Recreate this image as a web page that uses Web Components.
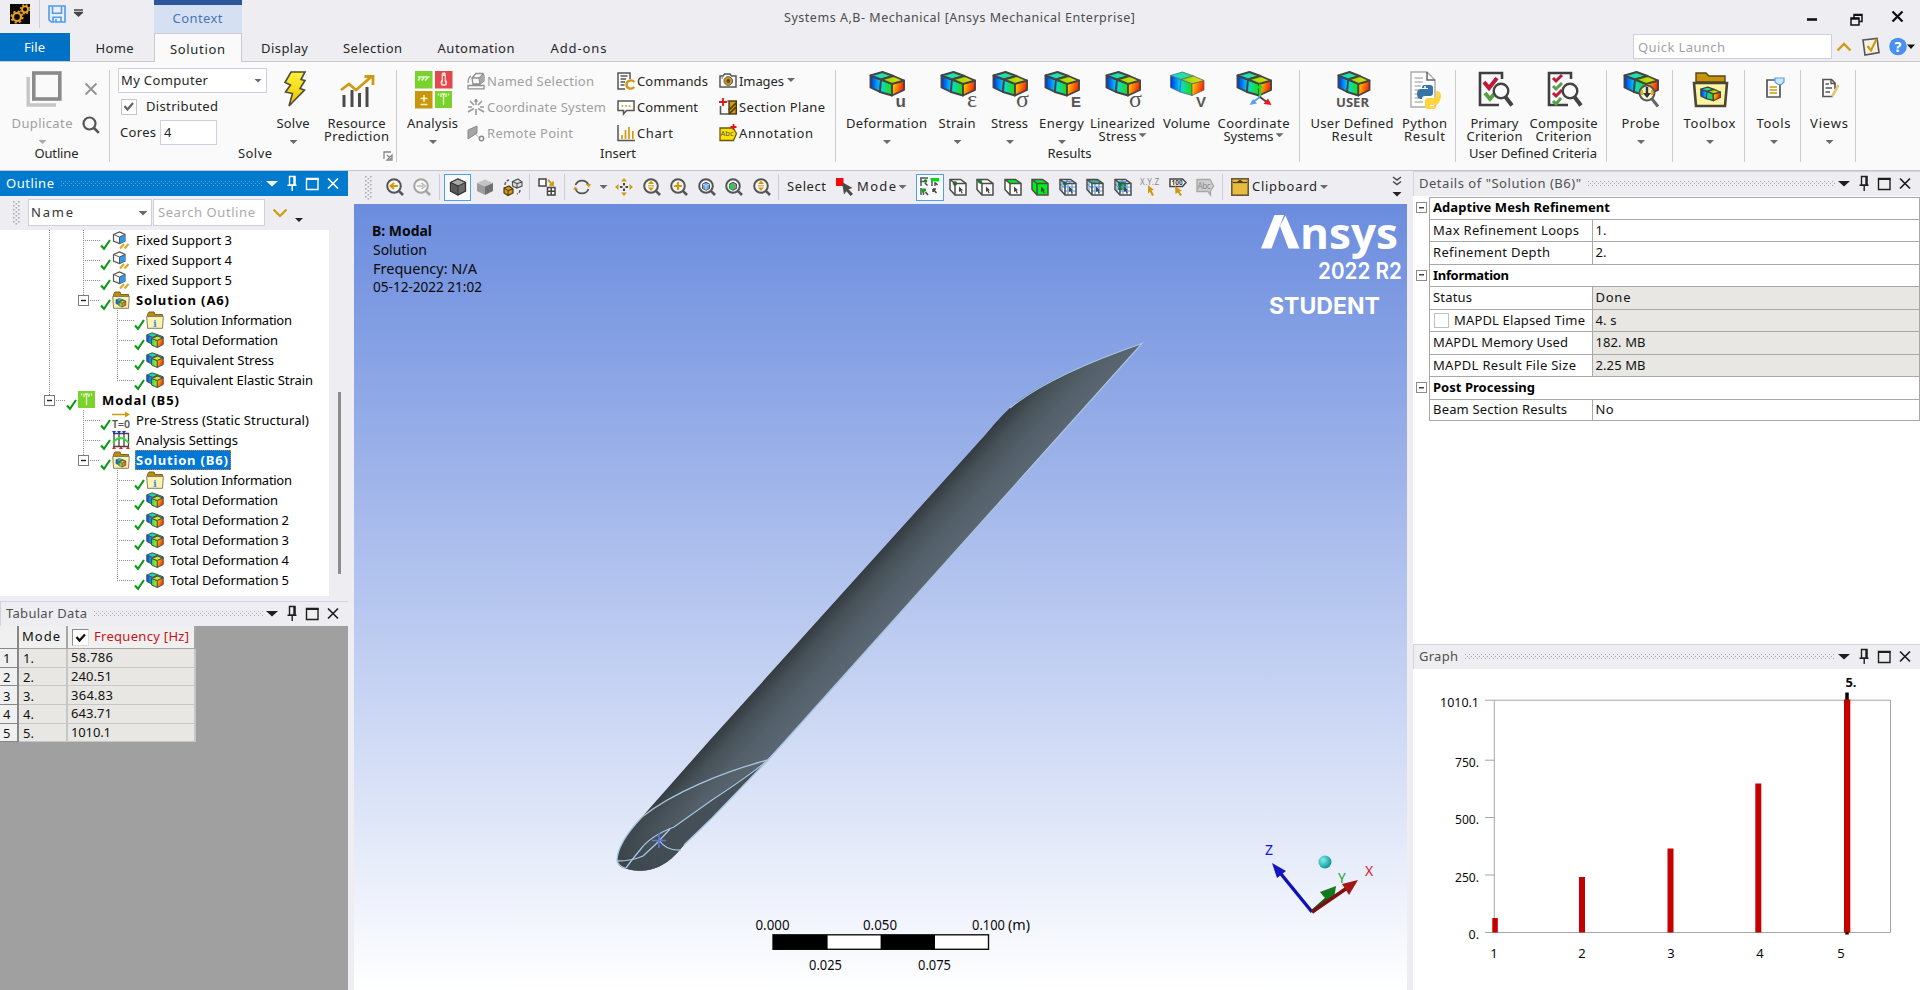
<!DOCTYPE html>
<html lang="en">
<head>
<meta charset="utf-8">
<title>Systems A,B - Mechanical</title>
<style>
html,body{margin:0;padding:0;height:100%;overflow:hidden}
body{font:13px/16px "Noto Sans","Open Sans",sans-serif;color:#262626;background:#eeeef2;width:1920px;height:990px}
</style>
</head>
<body>
<mech-app></mech-app>
<script>
/* ---------- icon library ---------- */
const grad=(id,a,b,x2=1,y2=0)=>`<linearGradient id="${id}" x1="0" y1="0" x2="${x2}" y2="${y2}"><stop offset="0" stop-color="${a}"/><stop offset="1" stop-color="${b}"/></linearGradient>`;
const cubes=(sw=1.9,st='#444')=>`<defs>${grad('a','#0030e0','#00dcff')}${grad('b','#00dcf0','#28d800')}${grad('c','#ffe800','#ff2000',1,.3)}${grad('d','#00e0ff','#40e050')}${grad('e','#70e000','#ffd800')}</defs>
<g stroke="${st}" stroke-width="${sw}" stroke-linejoin="round"><path fill="url(#a)" d="M1.5 4.5 12 8.5 11 21 1.5 16.5Z"/><path fill="url(#b)" d="M12 8.5 23 12.8V24.5L11 21Z"/><path fill="url(#c)" d="M23 12.8 35 9.5V19L23 24.5Z"/><path fill="url(#d)" d="M1.5 4.5 13.5 1 24.5 5 12 8.5Z"/><path fill="url(#e)" d="M24.5 5 35 9.5 23 12.8 12 8.5Z"/></g>`;
/* compact double cube used at tree size */
const miniCubes=`<defs>${grad('a','#1040e0','#00d0f0')}${grad('b','#20d060','#c8f000')}${grad('c','#ffd800','#ff2800',1,.6)}${grad('d','#00c8f0','#40e060')}</defs>
<g stroke="#4a4f58" stroke-width="1" stroke-linejoin="round"><path fill="url(#a)" d="M.8 4 7 6.500V13.500L.8 10.500Z"/><path fill="url(#d)" d="M.8 4 6 1.800 12 3.800 7 6.500Z"/><path fill="url(#b)" d="M5.500 7.500 11.300 9.500V16.500L5.500 14Z"/><path fill="#c8e820" d="M5.500 7.500 11.500 5 17.200 7 11.300 9.500Z"/><path fill="url(#c)" d="M11.300 9.500 17.200 7V13.500L11.300 16.500Z"/><path fill="#30d050" d="M12 3.800 17.200 5.800V7L11.500 5 7 6.500Z"/></g>`;
const sub=(t,f='Liberation Sans',s=17,w=700)=>`<text x="37" y="35.500" text-anchor="end" font-family="${f}" font-size="${s}" font-weight="${w}" fill="#555">${t}</text>`;
const mag=(inner,c='#555')=>`<circle cx="8" cy="8" r="6.8" fill="#f6f6f4" stroke="${c}" stroke-width="2"/><path d="M12.8 12.8 17 17" stroke="${c}" stroke-width="2.6"/>${inner}`;
const gold='#cf9a12';
const box=(fills,grid)=>`<path d="M1 1.5H11.5L17 5.5V17H6L1 11.5Z" fill="#fafafa"/>${fills}<g fill="none" stroke="${grid?'#5a9be8':'#555'}" stroke-width="1.2">${grid?'<path d="M9 5V17M13 5V17M5 9H17M5 13H17M3 3V14M4 3.5H14M7 1.5 12 5.5M1 6 6 10"/>':''}</g><path d="M1 1.5H11.5L17 5.5V17H6L1 11.5ZM1 1.5 6 5.5H17M6 5.5V17" fill="none" stroke="#4c4c4c" stroke-width="1.5"/><path d="M10 8.5 14 12.2 12.5 12.4 13.8 15 12.6 15.6 11.5 13 10 14Z" fill="#444"/>`;
const folder=(inner)=>`<path d="M1.5 3.5 3 1H8L9 3.5H16.5V7H1.5Z" fill="#b98a14" stroke="#7a6226"/><path d="M.7 5.5H17.3L16.5 17.3H1.6Z" fill="#fdf2b0" stroke="#86805c"/>${inner}`;
const modalIcon='<rect width="17" height="17" fill="#7ad32c"/><path d="M8.5 3V14M6 2.5V6M11 2.5V6M3.5 2.5V4.5M13.5 2.5V4.5M7 3H10" stroke="#e8fbd6" stroke-width="1.3" fill="none"/>';
const critDoc='<path d="M25 8V2H3V34H22" fill="none" stroke="#3f3f3f" stroke-width="2.6"/>';
const critMag='<circle cx="24" cy="20" r="7.3" fill="#fdfdfd" stroke="#444" stroke-width="2.4"/><path d="M28.5 26 35 34.5" stroke="#444" stroke-width="4"/>';
const I={
app:[20,20,'<rect width="20" height="20" fill="#0b0a08"/><g fill="none" stroke="#e8a21c"><circle cx="7" cy="13" r="4" stroke-width="2.2"/><circle cx="7" cy="13" r="5.6" stroke-width="1.8" stroke-dasharray="2.2 2.2"/><circle cx="15" cy="5.3" r="3" stroke-width="1.8"/><circle cx="15" cy="5.3" r="4.4" stroke-width="1.6" stroke-dasharray="1.8 1.7"/></g>'],
save:[18,18,'<g fill="none" stroke="#4c9df2" stroke-width="1.6"><path d="M1 1H17V17H3.5L1 14.8Z"/><path d="M4.5 1V8.3H13.5V1M5 17V12.3H13V17M8 14V17"/></g>'],
qat:[9,8,'<path d="M0 1H9M0 3.5H9" stroke="#444" stroke-width="1.5"/><path d="M.3 4H8.7L4.5 8Z" fill="#444"/>'],
win:[110,20,'<g stroke="#111" fill="none"><path d="M6 11.5H16" stroke-width="2.600"/><path d="M50 10H58V17H50ZM53 9.5V6.5H61V13.5H58.5" stroke-width="1.5"/><path d="M50 10.8H58M53 7H61" stroke-width="2"/><path d="M91.5 3.5 101.500 13.500M101.500 3.5 91.5 13.500" stroke-width="2.3"/></g>'],
help:[88,28,`<path d="M5.5 17.5 12 11 18.5 17.5" fill="none" stroke="${gold}" stroke-width="2.4"/><path d="M31 7 45 5.500 47 19.500 33 22Z" fill="#f4f0e4" stroke="#555" stroke-width="1.6"/><path d="M35.5 13 39 17.5 44.5 6" stroke="${gold}" stroke-width="2.2" fill="none"/><circle cx="66" cy="13.5" r="8.8" fill="#4a90f0"/><text x="66" y="18.7" text-anchor="middle" font-size="14.5" font-weight="700" fill="#fff">?</text><path d="M75 11.5H83L79 16Z" fill="#111"/>`],
dup:[36,36,'<path d="M2.2 6V34H30" fill="none" stroke="#c6c6c6" stroke-width="3.4"/><rect x="7.8" y="2" width="26" height="26" fill="#fafafa" stroke="#8a8a8a" stroke-width="3.6"/>'],
del:[14,14,'<path d="M1.5 1.5 12.5 12.5M12.5 1.5 1.5 12.5" stroke="#929292" stroke-width="1.8"/>'],
find:[18,18,'<circle cx="7.5" cy="7.5" r="6" fill="none" stroke="#555" stroke-width="2.2"/><path d="M12 12 16.8 16.8" stroke="#555" stroke-width="2.6"/>'],
bolt:[36,36,`<defs>${grad('a','#fff23a','#e8c400',0,1)}</defs><path d="M14 1H28L24 8.5 28 9.5 23 17.5 27.5 19 12 35 15.5 22.5 8.5 21 13.5 14 8 11.5Z" fill="url(#a)" stroke="#4c4a3a" stroke-width="1.6"/>`],
resource:[36,36,`<path d="M4 36V24M12 36V19M19.5 36V22M27 36V16" stroke="#4a4a4a" stroke-width="3"/><path d="M1 19 9 13 16 19 31 6M24.5 5.5H33V14" fill="none" stroke="${gold}" stroke-width="2.8"/>`],
launch:[10,10,'<path d="M1 8V1H8M4 4 8 8M9 4V9H4Z" fill="none" stroke="#888" stroke-width="1.3"/>'],
analysis:[38,38,`<rect width="17.5" height="17.5" fill="#7ad32c"/><rect x="20" width="17.5" height="17.5" fill="#e2484c"/><rect y="20" width="17.5" height="17.5" fill="#c8960c"/><g transform="translate(20 20)">${modalIcon}</g><path d="M3 6H14.5M3 9.5 5 7M6.5 9.5 9 7M10 9.5 12.5 7" stroke="#e8fbd6" stroke-width="1.5"/><path d="M28.8 3.5V10" stroke="#fbd8d8" stroke-width="4.4" stroke-linecap="round"/><circle cx="28.8" cy="11.8" r="3.3" fill="#fbd8d8"/><path d="M28.8 5V11" stroke="#e2484c" stroke-width="1.6"/><circle cx="28.8" cy="11.8" r="1.5" fill="#e2484c"/><path d="M5.5 27.5H12.5M9 24V31M5.5 33.5H12.5" stroke="#fff3c8" stroke-width="1.5"/>`],
named:[18,18,'<g fill="none" stroke="#8e8e8e" stroke-width="1.3"><path d="M5 6 9 1.5H16L17 4V9L13 12H6ZM5 6H12L16.5 2M12 6 13 12M1 16.8H17V13.5H1ZM1 11C1 8 2 5 4 4"/></g><path d="M12.5 6 16.5 3V9L13 11.5Z" fill="#a6a6a6"/>'],
coord:[18,18,'<g stroke="#9a9a9a" stroke-width="1.6"><path d="M9 1V7M9 11V17M1 14 7 10.5M17 14 11 10.5M3 3 7 7M15 3 11 7M1 9H5M13 9H17"/></g><path d="M6.5 3.5 9 1 11.5 3.5Z" fill="#888"/>'],
remote:[18,18,'<path d="M1 6 10 2V9L1 15Z" fill="#a5a5a5" stroke="#888"/><path d="M7 9 14 15" stroke="#999" stroke-dasharray="2 1"/><circle cx="14.5" cy="14.5" r="2.2" fill="none" stroke="#888" stroke-width="1.4"/>'],
cmd:[18,18,`<path d="M13 7V1H1V17H8" fill="#fff" stroke="#555" stroke-width="1.5"/><path d="M3.5 4H10.5M3.5 7H9M3.5 10H8M3.5 13H7.5" stroke="#555" stroke-width="1.5"/><path d="M17.3 10C15 7 9.5 8.5 9.5 12.7S15 17.8 17.3 15" fill="none" stroke="${gold}" stroke-width="2.4"/>`],
comment:[18,18,`<path d="M1 3H17V12.5H9.5L6.5 16V12.5H1Z" fill="#fff" stroke="#555" stroke-width="1.5"/><path d="M4.5 8H13.5" stroke="${gold}" stroke-width="1.7" stroke-dasharray="1.8 1.8"/>`],
chart:[18,18,`<path d="M1 1V16.5H18" stroke="#555" stroke-width="1.5" fill="none"/><path d="M5 15V11M8.5 15V6M12 15V3M15.8 15V7" stroke="${gold}" stroke-width="1.7"/>`],
images:[18,18,`<path d="M1 4H4L5.5 2H11L12.5 4H17V15H1Z" fill="#fafafa" stroke="#555" stroke-width="1.5"/><circle cx="9.3" cy="9" r="4.3" fill="${gold}" stroke="#555"/><circle cx="9.3" cy="9" r="1.9" fill="#554a30"/><path d="M2.5 6H4" stroke="#555"/>`],
section:[18,18,`<rect x="10" y="3" width="7.3" height="13" fill="${gold}" stroke="#4a3a10" stroke-width="1.4"/><path d="M10 12 17 5M10 16 17 9" stroke="#4a3a10" stroke-width="1.6"/><path d="M1.5 8V16H10" fill="none" stroke="#555" stroke-width="1.6"/><path d="M4 0V8M0 4H8" stroke="#e81414" stroke-width="1.8"/><path d="M8 3H10" stroke="#555"/>`],
annot:[18,18,'<path d="M1 4H14L17.5 9.5 14.5 16.5H1Z" fill="#ffe000" stroke="#635a20" stroke-width="1.3"/><text x="1.5" y="12" font-size="7.5" fill="#555">Abc</text><path d="M14.5 0V6M11.5 3H17.5" stroke="#e81414" stroke-width="1.8"/>'],
rU:[38,38,cubes()+sub('u')],rE:[38,38,cubes()+sub('ε','Liberation Serif',24,400)],rS:[38,38,cubes()+sub('σ','Liberation Serif',24,400)],rEn:[38,38,cubes()+sub('E','Liberation Sans',15)],rV:[38,38,cubes(.8,'#567')+sub('V','Liberation Sans',15)],
rC:[38,38,cubes()+'<path d="M24 26V15" stroke="#22d822" stroke-width="2.4"/><path d="M20.8 17.5H27.2L24 12.5Z" fill="#18e018"/><path d="M24 26 17 31" stroke="#5aa0f0" stroke-width="2"/><path d="M13.5 34 21 32.5 17 28Z" fill="#5aa0f0"/><path d="M24 26 32 32" stroke="#444" stroke-width="2"/><path d="M35.5 34 27.5 33 32 27.5Z" fill="#f01818"/>'],
rUser:[38,38,`<g transform="translate(2 0) scale(.93 1)">${cubes()}</g><text x="17.500" y="35.8" text-anchor="middle" font-size="11.5" font-weight="700" fill="#555" textLength="33" lengthAdjust="spacingAndGlyphs">USER</text>`],
rPy:[38,38,'<path d="M4 1H20L28 9V36H4Z" fill="#fdfdfd" stroke="#aaa" stroke-width="1.4"/><path d="M20 1V9H28" fill="none" stroke="#666" stroke-width="1.5"/><path d="M7.500 7H16M7.500 11H16M7.500 15H14M7.500 19H12M7.500 23H11M7.500 27H12M7.500 31H16" stroke="#b8b8b8" stroke-width="1.300"/><path d="M17 14H23Q26 14 26 17V22Q26 25 23 25H18Q15 25 15 28H13Q10 27 10 22.500T14 18H21V17H15Q15 14 17 14Z" fill="#3974a6"/><path d="M27 38H21Q18 38 18 35V30Q18 27 21 27H26Q29 27 29 24V20Q34 20 34 25T30 34H23V35H29Q29 38 27 38Z" fill="#ffd640"/><circle cx="18" cy="16" r="1" fill="#fff"/>'],
rPri:[38,38,critDoc+'<path d="M7 11 12 17 20 7" fill="none" stroke="#c01838" stroke-width="4"/><path d="M8 22 13 28 18 22" fill="none" stroke="#58a048" stroke-width="4"/>'+critMag],
rCom:[38,38,critDoc+'<path d="M7 7 10 10 16 4M7 22 10 25 16 19" fill="none" stroke="#c01838" stroke-width="3"/><path d="M7 15 10 18 16 12M7 30 10 33 15 27" fill="none" stroke="#58a048" stroke-width="3"/>'+critMag],
rPro:[38,38,cubes()+'<circle cx="24" cy="22" r="7.500" fill="#fff6d0" fill-opacity=".9" stroke="#555" stroke-width="2"/><path d="M24 16V24" stroke="#333" stroke-width="2.400"/><path d="M20 22H28L24 27Z" fill="#333"/><path d="M19 19V24M29 19V24" stroke="#e8b000" stroke-width="2"/><path d="M29 28 35 35.500" stroke="#666" stroke-width="3"/>'],
rBox:[38,38,'<path d="M4 11V2H14L17 5H33V11Z" fill="#c8920a" stroke="#56471c" stroke-width="1.400"/><path d="M2 12H35L33 35H4Z" fill="#fff3a4" stroke="#4a4636" stroke-width="2.600"/><g transform="translate(8 15.500) scale(.58)">'+cubes(2.2)+'</g>'],
rTool:[38,38,'<path d="M13 9H20L24 13V26H11V9Z" fill="#fff" stroke="#555" stroke-width="1.700"/><path d="M13.500 16H21M13.500 19H21M13.500 22H21" stroke="'+gold+'" stroke-width="1.500"/><path d="M19 7H28V11L25.500 13.500H22L19 11Z" fill="#cfe4ff" stroke="#5a9be8" stroke-width="1.200"/>'],
rView:[38,38,'<path d="M23 18V12L19.500 8.500H11V25.500H21" fill="#fff" stroke="#555" stroke-width="1.700"/><path d="M19 8.500V12.500H23M13.500 13H17M13.500 17H20M13.500 21H18" stroke="#555" stroke-width="1.400" fill="none"/><path d="M26.500 14 20 25.500" stroke="#e8c878" stroke-width="2.600"/>'],
grip:[8,24,[0,1,2,3,4,5].map(i=>`<rect x="0" y="${1+i*4}" width="1.600" height="1.600" fill="#b0b0b4"/><rect x="5" y="${1+i*4}" width="1.600" height="1.600" fill="#b0b0b4"/><rect x="2.500" y="${3+i*4}" width="1.600" height="1.600" fill="#b0b0b4"/>`).join('')],
tBack:[18,18,mag(`<path d="M12 8H6M8 5 4.500 8 8 11" stroke="${gold}" stroke-width="2" fill="none"/>`)],
tFwd:[18,18,mag('<path d="M4 8H10M8.500 5 12 8 8.500 11" stroke="#bbb" stroke-width="1.600" fill="none"/>','#a5a5a5')],
tCube:[18,18,'<path d="M1.500 4.500 9 1 16.500 4.500V13L9 17 1.500 13Z" fill="#6a6a6a" stroke="#333" stroke-width="1.300"/><path d="M1.500 4.500 9 1 16.500 4.500 9 8Z" fill="#a8a8a8" stroke="#333"/><path d="M9 8V17L1.500 13V4.500Z" fill="#5a5a5a" stroke="#333"/>'],
tCube2:[18,18,'<path d="M1 5 9 1.500 17 5 9 8.500Z" fill="#c4c4c4"/><path d="M1 5 9 8.500V17L1 13Z" fill="#9c9c9c"/><path d="M17 5 9 8.500V17L17 13Z" fill="#707070"/>'],
tSwap:[20,18,`<path d="M9.500 3.500 15 1 19 4V8L14 10 9.500 8ZM9.500 3.500 14 5.500 19 4M14 5.500V10" fill="#ddd" stroke="#555" stroke-width="1.200"/><path d="M1 10 6 8 10 11V15L5 17.500 1 15Z" fill="${gold}" stroke="#4a3a10" stroke-width="1.200"/><path d="M1 10 5 12.500 10 11M5 12.500V17" fill="none" stroke="#4a3a10"/><path d="M2 7Q2 3 6 2M17 12Q17 15 14 16" stroke="#555" fill="none" stroke-width="1.400" stroke-dasharray="3 1.500"/>`],
tGrid:[18,18,`<rect x="1" y="1" width="7" height="7" fill="#fff" stroke="#444" stroke-width="1.500"/><path d="M9.500 9.500H17V17H9.500ZM13.200 9.500V17M9.500 13.200H17" fill="#fff" stroke="#444" stroke-width="1.500"/><path d="M10 2 15 7M15 3.500V7H11.500" stroke="${gold}" stroke-width="1.800" fill="none"/>`],
tRot:[18,18,`<path d="M2.500 7A7 7 0 0 1 15.500 7M15.500 11A7 7 0 0 1 2.500 11" fill="none" stroke="#555" stroke-width="1.800"/><path d="M12.500 6H18L16 9.500ZM0 11.500H5.500L2 8.500Z" fill="${gold}"/>`],
tMove:[18,18,`<path d="M9 0 12 3.500H6ZM9 18 12 14.500H6ZM0 9 3.500 6V12ZM18 9 14.500 6V12Z" fill="${gold}"/><path d="M9 5V7.500M9 10.500V13M5 9H7.500M10.500 9H13" stroke="#444" stroke-width="2"/>`],
tZ1:[18,18,mag(`<path d="M8 2.500 11 6H5ZM8 13 11 9.500H5Z" fill="${gold}"/><path d="M5 7.800H11" stroke="${gold}"/>`)],
tZ2:[18,18,mag(`<path d="M8 4V12M4 8H12" stroke="${gold}" stroke-width="2.200"/>`)],
tZ3:[18,18,mag('<path d="M4.500 6 8 4.300 11.500 6V10.500L8 12.300 4.500 10.500Z" fill="#6ba2e4" stroke="#456"/><path d="M4.500 6 8 7.500 11.500 6M8 7.500V12" stroke="#cde" fill="none"/>')],
tZ4:[18,18,mag('<path d="M4.500 6 8 4.300 11.500 6V10.500L8 12.300 4.500 10.500Z" fill="#7a9a80" stroke="#456"/><path d="M4.500 6 8 7.500V12L4.500 10.500Z" fill="#10e030"/>')],
tMode:[18,18,'<rect width="7.500" height="8" fill="#f80808"/><path d="M6 4 16.500 10 12.500 11.200 17 16 14.500 18 10.500 13.300 8 16.500Z" fill="#4a4a4a"/>'],
tPick:[24,20,'<g fill="none" stroke="#555" stroke-width="1.500"><path d="M2 1H10M3 1V9M2 4.500H6M13 2H21M14 3V9M17 5V9M3 11V18M5.500 14V18"/></g><path d="M12 1H21V4.500H14Z" fill="#00d818"/><circle cx="7.500" cy="4" r="1.800" fill="#108820"/><path d="M3 11.500H8V14L4 16Z" fill="#20a030"/><path d="M7 6 9.500 8.500M15 12 18.500 16M15 12V15M15 12H18M17.500 6 19.500 8M7.500 15 10 18" stroke="#444" stroke-width="1.500"/>'],
tB1:[18,18,box('<circle cx="6" cy="5.500" r="2.200" fill="#108820"/>')],
tB2:[18,18,box('<path d="M1 1.500H5L6 5.500 3 5Z" fill="#00c820" stroke="#00a820"/>')],
tB3:[18,18,box('<path d="M1 1.500H11.500L17 5.500H6Z" fill="#00f018"/>')],
tB4:[18,18,box('<path d="M1 1.500H11.500L17 5.500V17H6L1 11.500Z" fill="#00f018"/>')],
tB5:[18,18,box('<circle cx="6" cy="5.500" r="2.200" fill="#108820"/>',1)],
tB6:[18,18,box('<path d="M1 1.500H11.500L17 5.500H6Z" fill="#20c030"/>',1)],
tB7:[18,18,box('<rect x="4" y="4" width="8" height="8" fill="#109828"/>',1)],
tXyz:[20,18,`<text x="0" y="7" font-size="8" fill="#888" textLength="19">X.Y.Z</text><path d="M8 7 14 12 11.500 12.500 14 17 12 18 10 14 8 15.500Z" fill="${gold}"/>`],
tTag:[18,18,`<path d="M1 1H13.500L17 4.500 13.500 8.500H1Z" fill="#fff" stroke="#444" stroke-width="1.500"/><text x="2.500" y="7.200" font-size="6.500" font-weight="700" fill="#333">100</text><path d="M6 8 13 13 10.500 13.500 13 17 11 18 9 14.500 6.500 16Z" fill="${gold}"/>`],
tAbc:[18,18,'<path d="M1 1.500H14L17.500 8 14.500 13V17L12 13.500H1Z" fill="#cfcfcf" stroke="#a8a8a8" stroke-width="1.400"/><text x="1.500" y="11" font-size="8" fill="#888" textLength="13">Abc</text>'],
tClip:[18,18,'<rect x=".8" y=".8" width="16.400" height="16.400" fill="#e8bc40" stroke="#6a5a34" stroke-width="1.600"/><path d="M2 4.500H16" stroke="#4c4224" stroke-width="1.300"/><path d="M6 4 9 1.500 12 4Z" fill="#4c4224"/>'],
tMore:[12,24,'<path d="M2 2 6 5 10 2M2 6.500 6 9.500 10 6.500" fill="none" stroke="#444" stroke-width="1.400"/><path d="M1.500 17H10.500L6 21.500Z" fill="#222"/>'],
chev:[16,10,`<path d="M1.500 1.500 8 8 14.500 1.500" fill="none" stroke="${gold}" stroke-width="2.200"/>`],
check:[12,12,'<path d="M1 6.500 4 9.800 10 1" fill="none" stroke="#0a9a14" stroke-width="2.100"/>'],
xSup:[18,18,'<path d="M1.500 3.500 7.500 1 13 3.500V10L7.500 12.500 1.500 10Z" fill="#fff" stroke="#555" stroke-width="1.200"/><path d="M7.500 6 13 3.500V10L7.500 12.500Z" fill="#2a98f4"/><path d="M1.500 3.500 7.500 6 13 3.500M7.500 6V12.500" fill="none" stroke="#555"/><path d="M8 17.500 12 13M12.500 17.500 16.500 13" stroke="#dca824" stroke-width="2"/>'],
xSol:[18,18,folder('<g transform="translate(3.500 6.500) scale(.6 .58)">'+miniCubes+'</g>')],
xInf:[18,18,folder('<text x="9" y="15.500" text-anchor="middle" font-family="DejaVu Serif" font-size="10" font-weight="700" fill="#4a90e8">i</text>')],
xDef:[18,18,miniCubes],
xMod:[18,18,modalIcon],
xPre:[18,18,`<path d="M0 3.500H14" stroke="${gold}" stroke-width="1.500"/><path d="M13 .5 18 3.500 13 6.500Z" fill="${gold}"/><text x="0" y="16.500" font-size="10" font-weight="600" fill="#555" textLength="18" lengthAdjust="spacingAndGlyphs">T=0</text>`],
xSet:[18,18,'<path d="M2 2V16M7 2V16M12 2V16M16.500 2V16M1 2.500H17M1 15.500H17" stroke="#444" stroke-width="1.300"/><path d="M1 12Q8 2 17 12" fill="none" stroke="#30e030" stroke-width="1.800"/><path d="M0 0H4L2 3ZM5 0H9L7 3ZM10 0H14L12 3Z" fill="#2030e0"/><path d="M0 18H4L2 15ZM7 18H11L9 15ZM14 18H18L16 15Z" fill="#e82020"/>']
};

/* ---------- primitives ---------- */
const define=(name,build)=>customElements.define(name,class extends HTMLElement{
  connectedCallback(){ if(this.shadowRoot)return; this.attachShadow({mode:'open'}).innerHTML=build(this); }
});
class UiText extends HTMLElement{
  connectedCallback(){
    if(this.shadowRoot)return;
    this.attachShadow({mode:'open'}).innerHTML='<style>:host{display:block;flex:none;white-space:pre;margin:-1px 0 1px -1px}span{display:inline-block}</style><span><slot></slot></span>';
    const w=+this.getAttribute('w'); if(!w)return;
    const s=this.shadowRoot.querySelector('span'), n=this.textContent.length;
    const nat=s.getBoundingClientRect().width;
    s.style.letterSpacing=((w+1-nat)/Math.max(1,n-1)).toFixed(3)+'px';
    this.style.width=(w+1)+'px';
  }
}
customElements.define('ui-text',UiText);
define('ui-icon',e=>{const [w,h,s]=I[e.getAttribute('name')];return `<style>:host{display:block;flex:none;width:${w}px;height:${h}px}svg{display:block;overflow:visible}</style><svg width="${w}" height="${h}" viewBox="0 0 ${w} ${h}">${s}</svg>`});
define('ui-arrow',()=>`<style>:host{display:block;flex:none;width:8px;height:4px;background:var(--arrow,#6a6a6a);clip-path:polygon(0 0,100% 0,50% 100%)}</style>`);
const T=(t,w,c='')=>`<ui-text w="${w}" class="${c}">${t}</ui-text>`;
const ic=n=>`<ui-icon name="${n}"></ui-icon>`;

/* ---------- title bar and tabs ---------- */
define('app-title',()=>`<style>
:host{display:grid;grid-template-columns:154px 88px 1fr 242px;height:33px}
.q{display:flex;padding-left:10px}.q ui-icon:nth-child(1){margin-top:4px}.q i{width:1px;height:28px;background:#cfcfda;margin:0 8px 0 9px}.q ui-icon:nth-child(3){margin:5px 8px 0 0}.q ui-icon:nth-child(4){margin-top:9px}
.c{background:#d5e1f2;border-top:5px solid #2b579a;box-sizing:border-box;color:#4a74b8;display:flex;justify-content:center;padding-top:6px}
.t{display:flex;justify-content:center;padding-top:11px;color:#4c4c4c;font-size:12.5px}.w{padding:8px 0 0 122px;margin-left:1px}</style>
<div class="q">${ic('app')}<i></i>${ic('save')}${ic('qat')}</div><div class="c">${T('Context',49)}</div><div class="t">${T('Systems A,B- Mechanical [Ansys Mechanical Enterprise]',350)}</div><div class="w">${ic('win')}</div>`);
define('app-tabs',()=>`<style>
:host{display:flex;height:29px;box-sizing:border-box;border-bottom:1px solid #c9c9ce}
div{display:flex;justify-content:center;align-items:center;height:28px;box-sizing:border-box;padding-top:4px}
.f{background:#0072c6;color:#fff;width:70px;padding-top:2px}
.on{background:#fafafa;border:1px solid #c9c9ce;border-bottom:0;height:29px;width:88px}
.s{margin-left:auto;width:199px;height:25px;border:1px solid #cfcfe0;background:#fff;margin-top:1px;justify-content:flex-start;padding:3px 0 0 5px;color:#a2a2a2}</style>
<div class="f">${T('File',20)}</div><div style="width:84px;padding-left:6px">${T('Home',37)}</div><div class="on">${T('Solution',54)}</div><div style="width:86px">${T('Display',46)}</div><div style="width:90px">${T('Selection',58)}</div><div style="width:117px">${T('Automation',76)}</div><div style="width:88px">${T('Add-ons',55)}</div>
<div class="s">${T('Quick Launch',86)}</div>${ic('help')}`);

/* ---------- ribbon ---------- */
define('rb-button',e=>{
  const l=e.getAttribute('label').split('|').map(s=>s.split(':'));
  const a=e.getAttribute('arrow');
  return `<style>:host{display:flex;flex-direction:column;align-items:center;flex:none;width:${e.getAttribute('w')}px;padding-top:1px;line-height:14px;${e.hasAttribute('off')?'color:#a0a0a0;--arrow:#a8a8a8':''}}
  .i{height:38px;margin-bottom:8px;display:flex;padding-left:2px}.r{display:flex;align-items:center;gap:2px;height:13.500px}.a{margin-top:9.500px}.r ui-arrow{margin-top:-4px}</style>
  <div class="i">${ic(e.getAttribute('icon'))}</div><div class="r">${T(l[0][0],l[0][1])}</div>${l[1]?`<div class="r">${T(l[1][0],l[1][1])}${a==='in'?'<ui-arrow></ui-arrow>':''}</div>`:a!=null?'<ui-arrow class="a"></ui-arrow>':''}`});
define('rb-group',e=>`<style>:host{display:flex;flex-direction:column;flex:none;box-sizing:border-box;width:${e.getAttribute('w')}px;height:92px;border-right:1px solid #cbcbd0}
.b{height:76px;display:flex;padding-left:${e.getAttribute('pad')||0}px}.l{display:flex;justify-content:center;padding-left:5px;position:relative}.l ui-icon{position:absolute;right:3px;top:5px}</style>
<div class="b"><slot></slot></div><div class="l">${e.getAttribute('label')?T(e.getAttribute('label'),e.getAttribute('lw')):''}${e.hasAttribute('launch')?ic('launch'):''}</div>`);
define('rb-list',e=>`<style>:host{display:flex;flex-direction:column;flex:none;width:${e.getAttribute('w')}px;${e.hasAttribute('off')?'color:#a0a0a0':''}}
div{display:flex;flex:none;align-items:center;gap:3px;height:26px}div ui-icon{margin-top:-5px}div ui-text{margin:-4px 0 0 -1px}ui-arrow{margin:-6px 0 0 0}</style>${e.getAttribute('items').split('|').map(s=>{const [n,t,w,a]=s.split(':');return `<div>${ic(n)}${T(t,w)}${a?'<ui-arrow></ui-arrow>':''}</div>`}).join('')}`);
define('rb-solve',()=>`<style>:host{display:block;width:150px;flex:none}
.c{width:149px;height:25px;border:1.500px solid #cfcfe0;background:#fff;display:flex;align-items:center;box-sizing:border-box;padding:0 4px 0 3px;justify-content:space-between;margin-top:-2px}
.k{display:flex;align-items:center;gap:10px;height:17px;margin:5px 0 0 3px}.k i{width:16px;height:16px;box-sizing:border-box;border:1.500px solid #c4c4d2;background:#fff;display:block}
.n{display:flex;align-items:center;height:25px;margin:5px 0 0 3px}.n div{border:1.500px solid #cfcfe0;background:#fff;width:57px;height:25px;box-sizing:border-box;margin-left:4px;padding:3px 0 0 3px}svg{display:block}</style>
<div class="c">${T('My Computer',86)}<ui-arrow></ui-arrow></div>
<div class="k"><i><svg width="13" height="13"><path d="M2.500 6 5.500 9.500 11 3" fill="none" stroke="#666" stroke-width="2.300"/></svg></i>${T('Distributed',71)}</div>
<div class="n">${T('Cores',35)}<div>4</div></div>`);
define('app-ribbon',()=>{
 const b=(icon,label,w,x='')=>`<rb-button icon="${icon}" label="${label}" w="${w}" ${x}></rb-button>`;
 return `<style>:host{display:flex;height:109px;box-sizing:border-box;background:#fafafa;padding-top:8px;border-bottom:1px solid #c4c4ca}.v{width:20px;display:flex;flex-direction:column;align-items:center;padding-top:11.500px;gap:20px;margin-left:-2px}</style>
<rb-group w="110" pad="2" label="Outline" lw="43">${b('dup','Duplicate:60',81,'off arrow')}<div class="v">${ic('del')}${ic('find')}</div></rb-group>
<rb-group w="287" pad="8" label="Solve" lw="33" launch><rb-solve></rb-solve>${b('bolt','Solve:32',51,'arrow')}${b('resource','Resource:57|Prediction:64',76)}</rb-group>
<rb-group w="439" pad="5" label="Insert" lw="35">${b('analysis','Analysis:50',62,'arrow')}<rb-list style="margin-left:3px" w="150" off items="named:Named Selection:106|coord:Coordinate System:118|remote:Remote Point:85"></rb-list><rb-list w="102" items="cmd:Commands:70|comment:Comment:60|chart:Chart:35"></rb-list><rb-list w="110" items="images:Images:44:a|section:Section Plane:85|annot:Annotation:73"></rb-list></rb-group>
<rb-group w="464" pad="8" label="Results" lw="43">${b('rU','Deformation:80',86,'arrow')}${b('rE','Strain:36',55,'arrow')}${b('rS','Stress:36',50,'arrow')}${b('rEn','Energy:44',54,'arrow')}${b('rS','Linearized:64|Stress:37',68,'arrow="in"')}${b('rV','Volume:46',60)}${b('rC','Coordinate:71|Systems:49',74,'arrow="in"')}</rb-group>
<rb-group w="156" pad="9">${b('rUser','User Defined:82|Result:40',87)}${b('rPy','Python:44|Result:40',58)}</rb-group>
<rb-group w="151" pad="9" label="User Defined Criteria" lw="127">${b('rPri','Primary:47|Criterion:55',60)}${b('rCom','Composite:67|Criterion:55',78)}</rb-group>
<rb-group w="66" pad="1">${b('rPro','Probe:37',66,'arrow')}</rb-group><rb-group w="72" pad="1">${b('rBox','Toolbox:51',72,'arrow')}</rb-group><rb-group w="56" pad="1">${b('rTool','Tools:33',56,'arrow')}</rb-group><rb-group w="55" pad="1">${b('rView','Views:37',55,'arrow')}</rb-group>`});

/* ---------- docked panels ---------- */
define('dock-header',e=>{const on=e.hasAttribute('active'),c=on?'#fff':'#1e1e1e';return `<style>
:host{display:flex;align-items:center;height:25px;flex:none;box-sizing:border-box;padding-left:7px;background:${on?'#007acc':'#eeeef2'};color:${on?'#fff':'#505050'};${on?'':'box-shadow:inset 1px 1px #d2d2e0'}}
.d{flex:1;margin-left:7px;height:6px}svg{display:block;flex:none}</style>
${T(e.getAttribute('label'),e.getAttribute('lw'))}<svg class="d" height="6" width="10" style="width:auto"><defs><pattern id="p" width="4" height="4" patternUnits="userSpaceOnUse"><path d="M0 .5H1M2 2.500H3" stroke="${on?'#56b0ee':'#a4a4ac'}"/></pattern></defs><rect width="100%" height="5" fill="url(#p)"/></svg>
<svg width="85" height="25"><g fill="none" stroke="${c}" stroke-width="1.400"><path d="M3 10H15L9 15.500Z" fill="${c}" stroke="none"/><path d="M26.500 5.500H32V14H26.500ZM24.500 14.300H33.500M29.200 14V20"/><path d="M31.300 5.500V14" stroke-width="2"/><path d="M43.500 7.500H55V18.500H43.500Z"/><path d="M43 8H55.500" stroke-width="2"/><path d="M65 7.500 75 17.500M75 7.500 65 17.500" stroke-width="1.700"/></g></svg>`});
define('tree-row',e=>{
 const lvl=+e.getAttribute('lvl'),open=e.hasAttribute('open'),b=e.hasAttribute('bold'),s=e.hasAttribute('sel');
 const x={1:49,2:83,3:117}[lvl];
 const guides=e.getAttribute('g').split(',').filter(Boolean).map(v=>{const[a,y1,y2]=v.split('_');return `M${+a+.5} ${y1}V${y2}`}).join('');
 return `<style>:host{display:flex;height:20px;color:#000}svg{display:block;flex:none}.n{height:20px;display:flex;align-items:center;box-sizing:border-box;${b?'font-weight:700;':''}${s?'background:#0078d7;color:#fff;outline:1px dotted #d08030;outline-offset:-1px;':''}padding:1px 3px 0 2px;margin-left:5px}
 .k{margin:9px 0 0 -2px}.i{margin-top:1px}</style>
 <svg width="${x+19}" height="20"><path d="${guides}M${x+(open?7:2)} 10.500H${x+17}" fill="none" stroke="#8c8c8c" stroke-dasharray="1 1"/>${open?`<rect x="${x-4.5}" y="5.500" width="10" height="10" fill="#fff" stroke="#7c7c7c"/><path d="M${x-2} 10.500H${x+3}" stroke="#222" stroke-width="1.400"/>`:''}</svg>
 <ui-icon class="k" name="check"></ui-icon><ui-icon class="i" name="${e.getAttribute('icon')}"></ui-icon><div class="n">${T(e.getAttribute('label'),e.getAttribute('w'))}</div>`});
define('outline-panel',()=>{
 const r=(lvl,icon,label,w,g,x='')=>`<tree-row lvl="${lvl}" icon="${icon}" label="${label}" w="${w}" g="${g}" ${x}></tree-row>`;
 const A='49_0_20',B='83_0_20',C='117_0_20';
 return `<style>:host{display:block;height:430px}
.t{display:flex;height:34px;padding:3px 0 0 13px;box-sizing:border-box}.t>div{height:27px;box-sizing:border-box;background:#fff;border:1.500px solid #cfcfe0;display:flex;align-items:center;justify-content:space-between;padding:1px 3px 0 3px}
.b{display:flex;height:366px}.w{width:329px;background:#fff;height:366px;overflow:hidden}.s{width:2.500px;height:182px;background:#8c8c8c;margin:162px 0 0 9px}</style>
<dock-header active label="Outline" lw="47"></dock-header>
<div class="t"><ui-icon name="grip" style="margin:1px 7px 0 0"></ui-icon><div style="width:124px;color:#333">${T('Name',41)}<ui-arrow style="width:10px;height:5px"></ui-arrow></div><div style="width:112px;margin-left:1px;padding-left:5px;color:#aaa">${T('Search Outline',96)}</div><ui-icon name="chev" style="margin:9px 7px 0"></ui-icon><ui-arrow style="--arrow:#222;margin-top:19px"></ui-arrow></div>
<div class="b"><div class="w">
${r(2,'xSup','Fixed Support 3',95,A+','+B)}${r(2,'xSup','Fixed Support 4',95,A+','+B)}${r(2,'xSup','Fixed Support 5',95,A+','+B)}
${r(2,'xSol','Solution (A6)',92,A+',83_0_6','open bold')}
${r(3,'xInf','Solution Information',121,A+','+C)}${r(3,'xDef','Total Deformation',107,A+','+C)}${r(3,'xDef','Equivalent Stress',103,A+','+C)}${r(3,'xDef','Equivalent Elastic Strain',142,A+',117_0_11')}
${r(1,'xMod','Modal (B5)',76,'49_0_6','open bold')}
${r(2,'xPre','Pre-Stress (Static Structural)',172,B)}${r(2,'xSet','Analysis Settings',101,B)}${r(2,'xSol','Solution (B6)',91,'83_0_6','open bold sel')}
${r(3,'xInf','Solution Information',121,C)}${r(3,'xDef','Total Deformation',107,C)}${[2,3,4,5].map(n=>r(3,'xDef','Total Deformation '+n,118,n===5?'117_0_11':C)).join('')}
</div><div class="s"></div></div>`});
define('tabular-panel',()=>`<style>:host{display:flex;flex-direction:column;flex:1}
.b{flex:1;background:#a0a0a0;width:348px}
table{border-collapse:separate;border-spacing:0;table-layout:fixed;width:196px;color:#111}
td,th{padding:2px 0 0 4px;height:18.700px;box-sizing:border-box;border-right:2px solid #c6c6c6;border-bottom:1.500px solid #c6c6c6;font-weight:400;text-align:left;background:#e8e7e3;line-height:15px}
tr:first-child th{height:23px;padding-top:0;background:#f0f0f0;border-color:#a6a6a6}tr th:first-child{background:#f0f0f0;border-color:#888;padding-left:3px}td{color:#111}
.h{display:flex;align-items:center;color:#cc1018;gap:6px}.h svg{background:#fff;border:1.500px solid #8c8c8c;border-right-color:#ddd;border-bottom-color:#ddd}</style>
<dock-header style="height:25px" label="Tabular Data" lw="80"></dock-header>
<div class="b"><table><colgroup><col style="width:19px"><col style="width:49px"><col style="width:128px"></colgroup>
<tr><th></th><th>${T('Mode',37)}</th><th><div class="h"><svg width="15" height="15"><path d="M3.500 7 6.500 10.500 12 4.500" fill="none" stroke="#111" stroke-width="2.300"/></svg>${T('Frequency [Hz]',94)}</div></th></tr>
${[['58.786',41],['240.51',40],['364.83',41],['643.71',40],['1010.1',39]].map((v,i)=>`<tr><th>${i+1}</th><td>${i+1}.</td><td>${T(v[0],v[1])}</td></tr>`).join('')}</table></div>`);

/* ---------- graphics view ---------- */
define('view-toolbar',()=>{
 /* [left edge, width, content] in window pixels; gaps become margins */
 const sep='<i></i>',ar='<ui-arrow></ui-arrow>';
 const items=[[365,8,ic('grip')],[385.5,18,ic('tBack')],[413,18,ic('tFwd')],[439,1,sep],[444,27,`<b>${ic('tCube')}</b>`],[476,18,ic('tCube2')],[503,20,ic('tSwap')],[529,1,sep],[538,18,ic('tGrid')],[564,1,sep],[573,18,ic('tRot')],[599.5,8,ar],[614.5,18,ic('tMove')],[643,18,ic('tZ1')],[670,18,ic('tZ2')],[697.5,18,ic('tZ3')],[724.5,18,ic('tZ4')],[752.5,18,ic('tZ1')],[778,1,sep],[788,40,T('Select',38)],[836,18,ic('tMode')],[858,40,T('Mode',38)],[898.5,8,ar],[916,28,`<b>${ic('tPick')}</b>`],[949,18,ic('tB1')],[976,18,ic('tB2')],[1003.5,18,ic('tB3')],[1031,18,ic('tB4')],[1058.5,18,ic('tB5')],[1086,18,ic('tB6')],[1113.5,18,ic('tB7')],[1140,20,ic('tXyz')],[1169,18,ic('tTag')],[1196,18,ic('tAbc')],[1221.500,1,sep],[1231,18,ic('tClip')],[1253,66,T('Clipboard',64)],[1320,8,ar],[1391,12,ic('tMore')]];
 let p=353;const h=items.map(([x,w,c])=>{const m=x-p;p=x+w;return `<div style="margin-left:${m}px;width:${w}px">${c}</div>`}).join('');
 return `<style>:host{display:flex;height:33px;box-sizing:border-box;padding-bottom:1px;align-items:center;background:#eeeef2;flex:none}div{flex:none}i{display:block;width:1px;height:26px;background:#ccccda}b{display:flex;align-items:center;justify-content:center;height:27px;box-sizing:border-box;border:1.500px solid #4ba0f5;background:#fafafc}</style>${h}`});
const tx=(x,y,w,s,extra='')=>`<text x="${x}" y="${y}" textLength="${w}" lengthAdjust="spacingAndGlyphs" ${extra}>${s}</text>`;
define('view-canvas',()=>`<style>:host{display:block;margin-left:1px;width:1053px;height:786px}svg{display:block}</style>
<svg width="1053" height="786" viewBox="354 204 1053 786" font-size="13.500" fill="#0a0a0a">
<defs><linearGradient id="bg" x1="0" y1="0" x2="0" y2="1"><stop offset="0" stop-color="#6b8cde"/><stop offset="1" stop-color="#fff"/></linearGradient>
<linearGradient id="sh" gradientUnits="userSpaceOnUse" x1="710" y1="740" x2="751" y2="777"><stop offset="0" stop-color="#343c41"/><stop offset=".25" stop-color="#465057"/><stop offset=".6" stop-color="#535f69"/><stop offset="1" stop-color="#5a6772"/></linearGradient>
<linearGradient id="lo" gradientUnits="userSpaceOnUse" x1="690" y1="790" x2="625" y2="860"><stop offset="0" stop-color="#4f5b63" stop-opacity="0"/><stop offset="1" stop-color="#3b444b" stop-opacity=".9"/></linearGradient>
<radialGradient id="ball" cx=".35" cy=".35" r=".7"><stop offset="0" stop-color="#80f0f0"/><stop offset="1" stop-color="#089090"/></radialGradient></defs>
<rect x="354" y="204" width="1053" height="786" fill="url(#bg)"/>
<path d="M1142 343.500C1100 358 1048 379 1018 401Q1003 413 986 434L710 740 642 817C624 836 617 850 617 861Q619 868 626 868.500C641 873 653 870 662 865Q672 860 684 845L712 818 786 740Z" fill="url(#sh)"/>
<path d="M768 760C725 771 672 793 642 817 624 836 617 850 617 861Q619 868 626 868.500C641 873 653 870 662 865Q672 860 684 845L712 818Z" fill="url(#lo)"/>
<path d="M768 760 674 826 660 838 625 868.500C641 873 653 870 662 865Q672 860 684 845L712 818Z" fill="#3f4951" opacity=".75"/>
<g fill="none" stroke="#a9c6e0" stroke-width="1.300"><path d="M1010 408C1044 380 1100 358 1142 343.500L786 740 768 760C725 771 672 793 642 817 624 836 617 850 617 861"/><path d="M768 760Q750 775 712 800L674 827Q650 836 640 850 634 857 626 868"/><path d="M617 861Q632 861 643 856 657 844 670 829M659 840Q666 851 681 850M617 861Q619 867 626 868.500M768 760 712 818 684 845"/></g>
<path d="M652 840.500H666M659 833V848" stroke="#5c78d8" stroke-width="1.500"/>
${tx(372,235.500,60,'B: Modal','font-weight="700"')}${tx(373,254.500,54,'Solution')}${tx(373,273.500,104,'Frequency: N/A')}${tx(373,292,109,'05-12-2022 21:02')}
<g fill="#fff" font-weight="700"><path d="M1261 248.500 1274.500 215H1284L1271.500 248.500Z"/><path d="M1285.500 215.500 1299.500 248.500H1288.500L1280 226Z"/>
<g font-family="Open Sans">${tx(1300,249,98,'nsys','font-size="43"')}</g><g font-family="Inter" font-weight="600">${tx(1318,278.500,84,'2022 R2','font-size="22.500"')}${tx(1269,314,111,'STUDENT','font-size="23.500" font-weight="700"')}</g></g>
<g><path d="M1312 912 1277 869" stroke="#1010b8" stroke-width="3.400"/><path d="M1272 863 1286 871 1277 878Z" fill="#1414c0"/>
<path d="M1312 912 1330 896" stroke="#106018" stroke-width="4"/><path d="M1320 892 1336 886 1334 899Q1328 901 1324 897Z" fill="#127a1c"/>
<path d="M1312 912 1347 888" stroke="#7a1010" stroke-width="3.800"/><path d="M1358 880 1342 884 1349 895Z" fill="#a01818"/><circle cx="1325" cy="862" r="6.500" fill="url(#ball)"/>
<text x="1265" y="855" fill="#1414d0" font-size="14">Z</text><text x="1338" y="882.500" fill="#18a028" font-size="13.500">Y</text><text x="1365" y="876" fill="#d82030" font-size="14">X</text></g>
<rect x="773" y="934.800" width="215.500" height="14.500" fill="#fff" stroke="#111" stroke-width="1.400"/><path d="M773 935H827.600V949.500H773ZM880.600 935H935V949.500H880.600Z" fill="#000"/>
${tx(755.5,929.5,34,'0.000')}${tx(863,929.5,34,'0.050')}${tx(972,929.5,33,'0.100')}${tx(1008,929.5,22,'(m)')}${tx(809,969.5,33,'0.025')}${tx(918,969.5,33,'0.075')}
</svg>`);

/* ---------- details and graph ---------- */
define('details-panel',()=>{
 const sec=(t,w)=>`<span class="e"></span><div class="h">${T(t,w)}</div>`;
 const row=(a,w,b,bw,g,c)=>`<span></span><div class="k">${c?'<i></i>':''}${T(a,w)}</div><div class="v${g?' g':''}">${T(b,bw)}</div>`;
 return `<style>:host{display:flex;flex-direction:column;height:473.500px;background:#eeeef2}
.b{flex:1;background:#fff;padding-top:.500px}
.g0{display:grid;grid-template-columns:16px 162.500px 1fr;grid-auto-rows:22.480px;color:#111}
.h{grid-column:2/4;font-weight:700;color:#000}.h,.k,.v{display:flex;align-items:center;border:1px solid #a8a8a8;border-width:1px 0 0 1.500px;padding-left:4px;border-right:1px solid #a8a8a8}.k{border-right:0}.g{background:#e8e7e3}
.g0>:nth-last-child(-n+2){border-bottom:1px solid #a8a8a8}
.k i{width:13px;height:13px;border:1px solid #c0c0c0;margin-right:6px}.e{align-self:center;margin-left:2.500px;width:9px;height:9px;border:1px solid #8c8c8c;background:linear-gradient(#444,#444) center/5px 1.500px no-repeat}</style>
<dock-header label='Details of "Solution (B6)"' lw="161"></dock-header><div class="b"><div class="g0">
${sec('Adaptive Mesh Refinement',176)}${row('Max Refinement Loops',145,'1.',10)}${row('Refinement Depth',116,'2.',10)}
${sec('Information',75)}${row('Status',38,'Done',34,1)}${row('MAPDL Elapsed Time',130,'4. s',20,1,1)}${row('MAPDL Memory Used',134,'182. MB',49,1)}${row('MAPDL Result File Size',142,'2.25 MB',49,1)}
${sec('Post Processing',101)}${row('Beam Section Results',133,'No',17)}</div></div>`});
define('graph-panel',()=>{
 const ys=[[700.7,'1010.1',39,707.5],[760.7,'750.',24,767],[818,'500.',24,824.5],[875.500,'250.',24,882],[933,'0.',10.5,939.5]];
 const bars=[[1492.300,918.500,5.500],[1579,877.500,6],[1667.500,849,6],[1755.300,784,6],[1844,700,6.300]];
 return `<style>:host{display:block}svg{display:block;background:#fff}</style><dock-header label="Graph" lw="38"></dock-header>
<svg width="507" height="321" viewBox="1413 669.500 507 321" font-size="13" fill="#0a0a0a"><path d="M1485 700.700H1890.500V933H1485M1494.300 700.700V933M1485 760.700H1494M1485 818H1494M1485 875.500H1494" fill="none" stroke="#a6a6a6"/>
<path d="M1847 693V935" stroke="#000" stroke-width="3.500"/>${bars.map(([x,y,w])=>`<rect x="${x}" y="${y}" width="${w}" height="${933-y}" fill="#c40000"/>`).join('')}
${ys.map(([,t,w,y])=>tx(1479-w,y,w,t)).join('')}${[1494,1582,1671,1760,1841].map((x,i)=>`<text x="${x}" y="958.500" text-anchor="middle">${i+1}</text>`).join('')}${tx(1845.5,687.5,11,'5.','font-weight="700" font-size="13"')}</svg>`});

/* ---------- shell ---------- */
define('mech-app',()=>`<style>:host{display:flex;flex-direction:column;width:1920px;height:990px;background:#eeeef2;overflow:hidden}
main{display:flex;flex:1;min-height:0}.l{width:348px;display:flex;flex-direction:column}.c{width:1055px;margin:0 5px 0 5px}.r{width:507px;display:flex;flex-direction:column}</style>
<app-title></app-title><app-tabs></app-tabs><app-ribbon></app-ribbon>
<main><div class="l"><outline-panel></outline-panel><tabular-panel></tabular-panel></div><div class="c"><view-toolbar></view-toolbar><view-canvas></view-canvas></div><div class="r"><details-panel></details-panel><graph-panel></graph-panel></div></main>`);
</script>
</body>
</html>
